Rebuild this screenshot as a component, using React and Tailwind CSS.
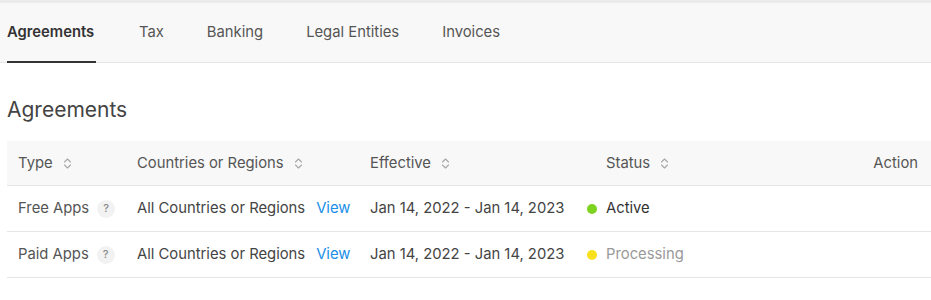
import React from "react";

function SortIcon() {
  return (
    <svg width="9" height="13" viewBox="0 0 9 13" className="ml-[10px] shrink-0" fill="none" stroke="#a8a8a8" strokeWidth="1.1" strokeLinecap="round" strokeLinejoin="round">
      <path d="M1.5 5 L4.5 2 L7.5 5" />
      <path d="M1.5 8 L4.5 11 L7.5 8" />
    </svg>
  );
}

function Help() {
  return (
    <span className="ml-[8px] inline-flex h-[18px] w-[18px] items-center justify-center rounded-full bg-[#f2f2f2] text-[11px] font-medium text-[#8a8a8a]">?</span>
  );
}

const tabs = ["Agreements", "Tax", "Banking", "Legal Entities", "Invoices"];

const rows = [
  { type: "Free Apps", status: "Active", dot: "bg-[#7ed321]", color: "text-[#333]" },
  { type: "Paid Apps", status: "Processing", dot: "bg-[#f8e01c]", color: "text-[#999]" },
];

export default function App() {
  return (
    <div className="w-[931px] h-[300px] bg-white text-[14.8px] text-[#333]" style={{ fontFamily: "Inter, 'Noto Sans', sans-serif" }}>
      <div className="h-[3px] bg-[#ebebeb]" />
      <div className="flex h-[60px] items-stretch gap-[43px] border-b border-[#e6e6e6] bg-[#f8f8f8] pl-[7px] text-[14.8px]">
        {tabs.map((t, i) => (
          <div key={t} className={"relative flex items-center " + (i === 0 ? "w-[89px] font-semibold text-[#333]" : "text-[#555]")}>
            {t}
            {i === 0 && <div className="absolute bottom-[-1px] left-0 right-0 h-[2px] bg-[#333]" />}
          </div>
        ))}
      </div>
      <div className="pl-[7px]">
        <h2 className="mt-[33px] text-[21px] leading-[28px] font-normal text-[#444]">Agreements</h2>
        <div className="mt-[17px]">
          <div className="grid h-[45px] grid-cols-[119px_233px_217px_1fr_auto] items-center border-b border-[#e6e6e6] bg-[#f8f8f8] text-[#555]">
            <div className="flex items-center pl-[11px]">Type<SortIcon /></div>
            <div className="flex items-center pl-[11px]">Countries or Regions<SortIcon /></div>
            <div className="flex items-center pl-[11px]">Effective<SortIcon /></div>
            <div className="flex items-center pl-[30px]">Status<SortIcon /></div>
            <div className="pr-[13px]">Action</div>
          </div>
          {rows.map((r) => (
            <div key={r.type} className="grid h-[46px] grid-cols-[119px_233px_217px_1fr_auto] items-center border-b border-[#e6e6e6]">
              <div className="flex items-center pl-[11px] text-[#555]">{r.type}<Help /></div>
              <div className="flex items-center pl-[11px] text-[#444]">All Countries or Regions<span className="ml-[11px] text-[#1a8fe8]">View</span></div>
              <div className="pl-[11px] text-[#444]">Jan 14, 2022 - Jan 14, 2023</div>
              <div className="flex items-center pl-[11px]">
                <span className={"h-[10px] w-[10px] rounded-full " + r.dot} />
                <span className={"ml-[9px] " + r.color}>{r.status}</span>
              </div>
              <div />
            </div>
          ))}
        </div>
      </div>
    </div>
  );
}
